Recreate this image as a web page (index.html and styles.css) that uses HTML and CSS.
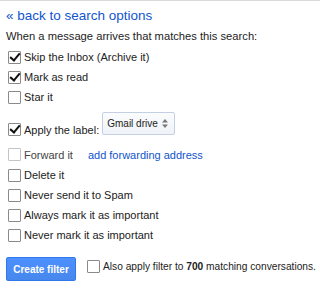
FILE: index.html
```html
<!DOCTYPE html>
<html lang="en">
<head>
  <meta charset="UTF-8" />
  <title>Create filter</title>
  <link rel="stylesheet" href="styles.css">
</head>
<body>
  <div class="panel">
    <a class="back-link" href="#">&laquo; back to search options</a>
    <p class="intro">When a message arrives that matches this search:</p>

    <div class="options">
      <label class="opt"><span class="box checked"></span>Skip the Inbox (Archive it)</label>
      <label class="opt"><span class="box checked"></span>Mark as read</label>
      <label class="opt"><span class="box"></span>Star it</label>
      <label class="opt label-row">
        <span class="box checked"></span>Apply the label:
        <span class="select">Gmail drive
          <svg class="updown" width="6" height="9" viewBox="0 0 6 9"><path d="M3 0L6 3.5H0z M3 9L0 5.5h6z" fill="#777"/></svg>
        </span>
      </label>
      <div class="opt disabled"><span class="box"></span>Forward it <a class="fwd-link" href="#">add forwarding address</a></div>
      <label class="opt"><span class="box"></span>Delete it</label>
      <label class="opt"><span class="box"></span>Never send it to Spam</label>
      <label class="opt"><span class="box"></span>Always mark it as important</label>
      <label class="opt"><span class="box"></span>Never mark it as important</label>
    </div>

    <div class="actions">
      <button class="create-btn">Create filter</button>
      <label class="opt also"><span class="box"></span><span>Also apply filter to <b>700</b> matching conversations.</span></label>
    </div>
  </div>
</body>
</html>
```

FILE: styles.css
```css
body {
  margin: 0;
  background: #fff;
  font-family: "Liberation Sans", Arial, sans-serif;
  font-size: 11px;
  color: #222;
}
.panel {
  border-top: 1px solid #d9d9d9;
  padding: 7px 6px 0 6px;
}
.back-link {
  display: block;
  color: #15c;
  text-decoration: none;
  font-size: 13.5px;
  line-height: 16px;
}
.intro {
  margin: 4px 0 0 0;
  font-size: 11.2px;
  line-height: 16px;
}
.options {
  margin-top: 3px;
}
.opt {
  display: flex;
  align-items: center;
  height: 20px;
  padding-left: 2px;
  white-space: nowrap;
}
.box {
  width: 11px;
  height: 11px;
  border: 1px solid #8a8a8a;
  border-radius: 1px;
  margin-right: 3px;
  position: relative;
  background: #fff;
  flex-shrink: 0;
}
.box.checked::after {
  content: "";
  position: absolute;
  left: 3px;
  top: -1px;
  width: 4px;
  height: 8px;
  border: solid #111;
  border-width: 0 2px 2px 0;
  transform: rotate(40deg);
}
.label-row {
  height: 37px;
  align-items: flex-end;
  padding-bottom: 4px;
  box-sizing: border-box;
  line-height: 20px;
}
.label-row .box {
  margin-bottom: 4px;
}
.select {
  display: inline-flex;
  align-items: center;
  gap: 4px;
  align-self: flex-start;
  margin: 5px 0 0 3px;
  height: 23px;
  box-sizing: border-box;
  padding: 0 6px 0 4px;
  border: 1px solid #c3d0e3;
  border-radius: 2px;
  background: linear-gradient(#fbfcfd, #eff3f8);
  font-size: 10px;
  color: #222;
}
.disabled {
  height: 21px;
  color: #444;
}
.disabled .box {
  border-color: #c4c4c4;
}
.fwd-link {
  color: #15c;
  text-decoration: none;
  margin-left: 15px;
}
.actions {
  display: flex;
  align-items: flex-start;
  margin-top: 12px;
}
.create-btn {
  flex-shrink: 0;
  width: 70px;
  height: 24px;
  padding: 0;
  border: 1px solid #3079ed;
  border-radius: 2px;
  background: linear-gradient(#4d90fe, #4787ed);
  color: #fff;
  font-family: "Liberation Sans", Arial, sans-serif;
  font-weight: bold;
  font-size: 10px;
  white-space: nowrap;
  box-shadow: 0 1px 1px rgba(0, 0, 0, 0.15);
}
.also {
  margin-left: 9px;
  height: 19px;
  font-size: 10.2px;
}
```
